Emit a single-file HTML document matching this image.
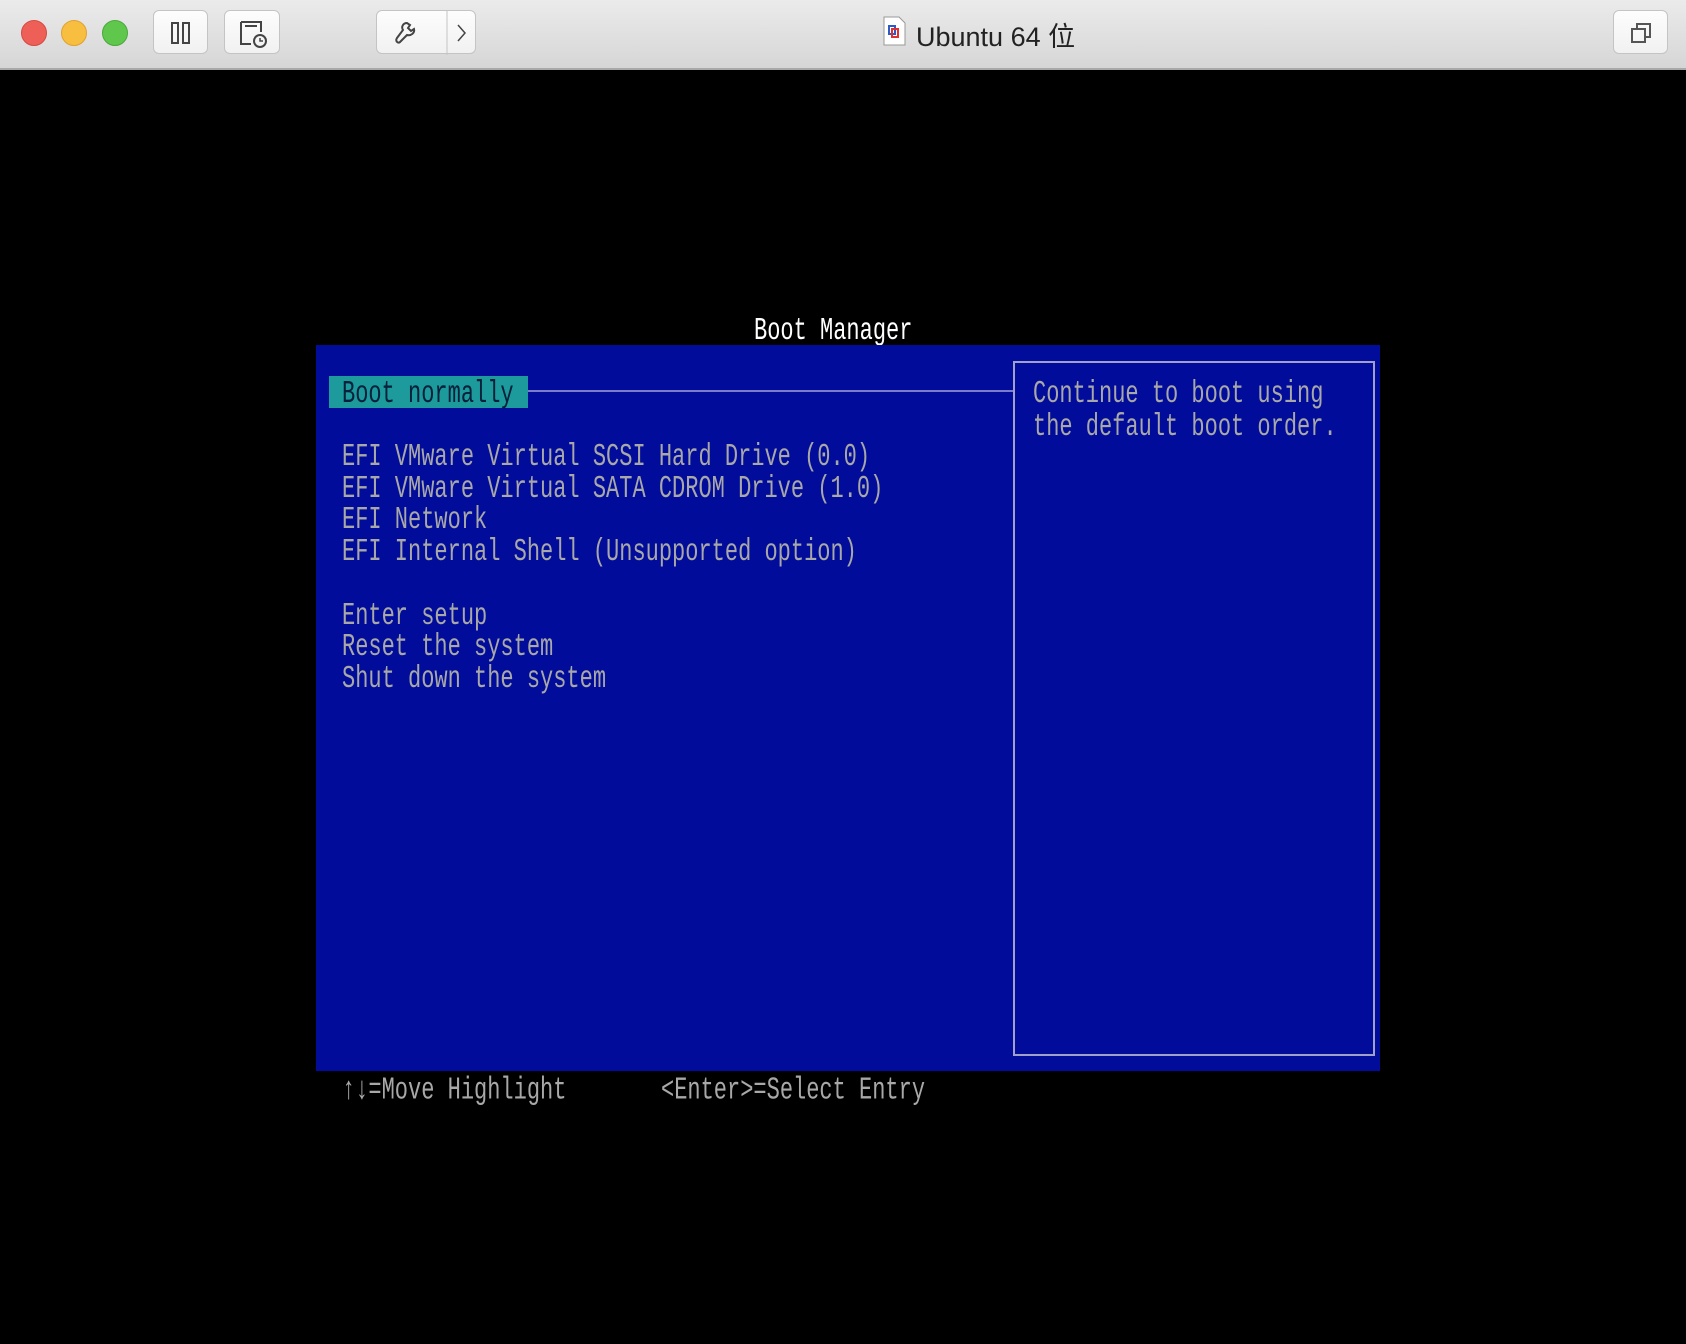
<!DOCTYPE html>
<html><head><meta charset="utf-8"><style>
body{margin:0;width:1686px;height:1344px;background:#000;position:relative;overflow:hidden;font-family:"Liberation Sans","Noto Sans CJK SC",sans-serif}
.bar{position:absolute;left:0;top:0;width:1686px;height:68px;background:linear-gradient(#ebebeb,#d6d6d6);border-bottom:2px solid #a8a8a8}
.dot{position:absolute;top:20px;width:24px;height:24px;border-radius:50%}
.btn{position:absolute;top:10px;height:44px;background:linear-gradient(#fdfdfd,#f1f1f1);border:1px solid #c4c4c4;border-radius:6px;box-sizing:border-box}
.t{position:absolute;font-family:"Liberation Mono",monospace;font-size:22px;color:#a8a8a8;white-space:pre;line-height:22px;transform:scaleY(1.45);transform-origin:0 50%}
</style></head><body>
<div class="bar">
<div class="dot" style="left:21px;background:#ee5f58;border:1px solid #d64a42"></div>
<div class="dot" style="left:61px;background:#f8be3f;border:1px solid #dfa232"></div>
<div class="dot" style="left:102px;background:#5fc84c;border:1px solid #4aa83a"></div>
<div class="btn" style="left:153px;width:55px"><svg width="55" height="44"><rect x="18" y="12" width="6" height="20" fill="none" stroke="#444" stroke-width="2"/><rect x="29" y="12" width="6" height="20" fill="none" stroke="#444" stroke-width="2"/></svg></div>
<div class="btn" style="left:224px;width:56px"><svg width="56" height="44"><path d="M16 11h20v10M16 11v22h10M20 15h12" fill="none" stroke="#444" stroke-width="2"/><circle cx="35" cy="30" r="6" fill="none" stroke="#444" stroke-width="2"/><path d="M35 27v3h3" stroke="#444" stroke-width="1.5" fill="none"/></svg></div>
<div class="btn" style="left:376px;width:100px"><svg width="100" height="44"><path d="M30 12c-4 0-6 4-4 7l-6 8c-2 3 1 6 3 4l7-7c4 1 8-2 7-6l-3 2-3-3 2-3z" fill="none" stroke="#444" stroke-width="2"/><line x1="70" y1="0" x2="70" y2="44" stroke="#c4c4c4"/><path d="M81 14l7 8-7 8" fill="none" stroke="#444" stroke-width="1.5"/></svg></div>
<div class="btn" style="left:1613px;width:55px"><svg width="55" height="44"><rect x="18" y="18" width="13" height="13" fill="none" stroke="#555" stroke-width="2"/><path d="M23 18v-5h13v13h-5" fill="none" stroke="#555" stroke-width="2"/></svg></div>
<svg style="position:absolute;left:883px;top:16px" width="24" height="30"><path d="M1 1h15l6 6v22H1z" fill="#fff" stroke="#999"/><rect x="6" y="10" width="6" height="8" fill="none" stroke="#2a5bc8" stroke-width="2"/><rect x="9" y="13" width="6" height="8" fill="none" stroke="#e03030" stroke-width="2"/></svg>
<div style="position:absolute;left:916px;top:15px;font-size:27px;color:#222">Ubuntu 64 位</div>
</div>
<div class="t" style="left:754px;top:321px;color:#fff">Boot Manager</div>
<div style="position:absolute;left:316px;top:345px;width:1064px;height:726px;background:#020c9a"></div>
<div style="position:absolute;left:329px;top:376px;width:199px;height:32px;background:#1d9a9c"></div>
<div style="position:absolute;left:528px;top:390px;width:485px;height:2px;background:#7c7ccc"></div>
<div style="position:absolute;left:1013px;top:361px;width:362px;height:695px;border:2px solid #a0a0c8;box-sizing:border-box"></div>
<div class="t" style="left:342px;top:384px;color:#05203a">Boot normally</div>
<div class="t" style="left:342px;top:447px">EFI VMware Virtual SCSI Hard Drive (0.0)</div>
<div class="t" style="left:342px;top:479px">EFI VMware Virtual SATA CDROM Drive (1.0)</div>
<div class="t" style="left:342px;top:510px">EFI Network</div>
<div class="t" style="left:342px;top:542px">EFI Internal Shell (Unsupported option)</div>
<div class="t" style="left:342px;top:606px">Enter setup</div>
<div class="t" style="left:342px;top:637px">Reset the system</div>
<div class="t" style="left:342px;top:669px">Shut down the system</div>
<div class="t" style="left:1033px;top:384px">Continue to boot using</div>
<div class="t" style="left:1033px;top:417px">the default boot order.</div>
<div class="t" style="left:342px;top:1080px">↑↓=Move Highlight</div>
<div class="t" style="left:661px;top:1080px">&lt;Enter&gt;=Select Entry</div>
</body></html>
